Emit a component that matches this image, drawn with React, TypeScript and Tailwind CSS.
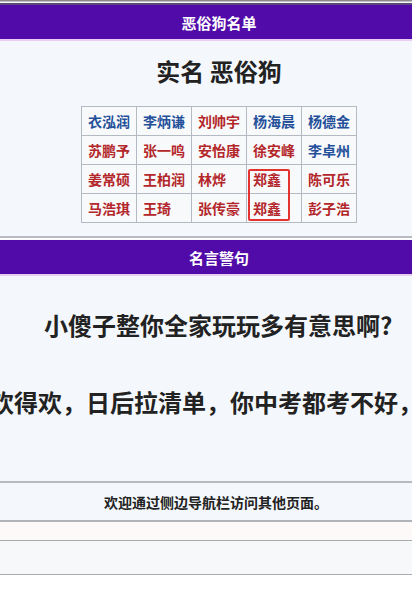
const FONT = { fontFamily: '"Noto Sans CJK SC", "Noto Sans", sans-serif' };

type Cell = { name: string; blue?: boolean };

const rows: Cell[][] = [
  [{ name: "衣泓润", blue: true }, { name: "李炳谦", blue: true }, { name: "刘帅宇" }, { name: "杨海晨", blue: true }, { name: "杨德金", blue: true }],
  [{ name: "苏鹏予" }, { name: "张一鸣" }, { name: "安怡康" }, { name: "徐安峰" }, { name: "李卓州", blue: true }],
  [{ name: "姜常硕" }, { name: "王柏润" }, { name: "林烨" }, { name: "郑鑫" }, { name: "陈可乐" }],
  [{ name: "马浩琪" }, { name: "王琦" }, { name: "张传豪" }, { name: "郑鑫" }, { name: "彭子浩" }],
];

function Header({ title }: { title: string }) {
  return (
    <div className="h-[36px] bg-[#510ba9] border-b-2 border-[#e9cdf2] flex items-center justify-center pl-[26px]">
      <span className="text-[15px] font-bold text-white leading-none">{title}</span>
    </div>
  );
}

export default function App() {
  return (
    <div className="w-[412px] h-[599px] overflow-hidden bg-white" style={FONT}>
      {/* top edge of previous card */}
      <div className="h-[1px] bg-[#8a8a8a]" />
      <div className="h-[1px] bg-[#c4c4c6]" />
      <div className="h-[1px] bg-[#f4f4f6]" />
      <div className="h-[2px] bg-[#5a4a7c]" />

      {/* Card 1 */}
      <div className="border-b-2 border-[#b8bcc0] shadow-[0_1px_2px_rgba(0,0,0,0.25)]">
        <Header title="恶俗狗名单" />
        <div className="bg-[#f4f8fc] pt-[13px] pb-[13px] pl-[26px] flex flex-col items-center">
          <h1 className="text-[24px] font-bold text-[#222] leading-[34px]">实名 恶俗狗</h1>
          <div className="relative mt-[18px]">
            <table className="border-collapse bg-[#f8f9fa]">
              <tbody>
                {rows.map((r, i) => (
                  <tr key={i}>
                    {r.map((c, j) => (
                      <td
                        key={j}
                        className={`border border-[#b4bac2] px-[6px] py-[4px] text-[14px] font-bold leading-[20px] w-[55px] text-left ${
                          c.blue ? "text-[#24509a]" : "text-[#b3262a]"
                        }`}
                      >
                        {c.name}
                      </td>
                    ))}
                  </tr>
                ))}
              </tbody>
            </table>
            <div className="absolute left-[167px] top-[63px] w-[42px] h-[52px] border-2 border-[#e3332f] rounded-[2px]" />
          </div>
        </div>
      </div>

      <div className="h-[2px] bg-white" />

      {/* Card 2 */}
      <div className="border-b-2 border-[#b8bcc0] shadow-[0_1px_2px_rgba(0,0,0,0.25)]">
        <Header title="名言警句" />
        <div className="bg-[#f4f8fc] h-[205px] overflow-hidden pt-[31px]">
          <p className="pl-[44px] text-[24px] font-bold text-[#222] leading-[36px] whitespace-nowrap">
            小傻子整你全家玩玩多有意思啊?
          </p>
          <div className="mt-[41px] flex justify-center">
            <p className="shrink-0 text-[24px] font-bold text-[#222] leading-[36px] whitespace-nowrap">
              欢得欢，日后拉清单，你中考都考不好，
            </p>
          </div>
        </div>
      </div>

      {/* Footer */}
      <div className="bg-[#f4f8fc] h-[39px] flex items-center justify-center pl-[20px] border-b-2 border-[#b0b4b8] shadow-[0_1px_2px_rgba(0,0,0,0.25)]">
        <span className="text-[14px] font-bold text-[#222] leading-none">欢迎通过侧边导航栏访问其他页面。</span>
      </div>

      <div className="h-[18px] bg-[#fdf9f9]" />
      <div className="h-[35px] bg-[#f7f8fa] border-y border-[#a8abb0]" />
    </div>
  );
}
